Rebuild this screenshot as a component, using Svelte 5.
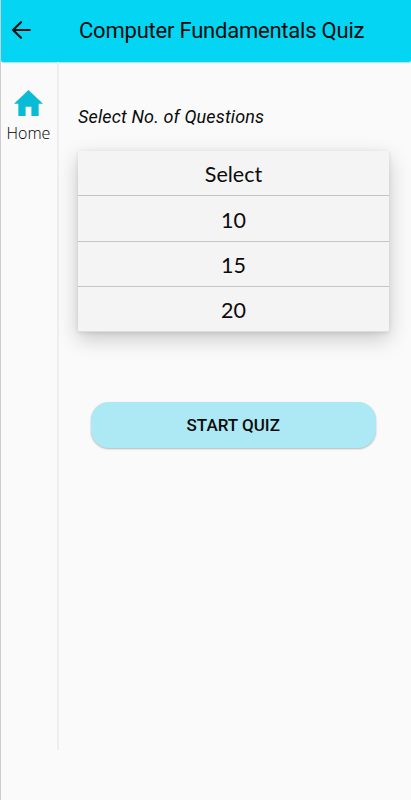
<script lang="ts">
  const options = ['Select', '10', '15', '20'];

  let selected = $state('Select');
</script>

<div class="screen">
  <header>
    <button class="back" aria-label="Back">
      <svg width="20" height="18" viewBox="0 0 20 18">
        <path d="M10 1.2 2 9l8 7.8M2 9h16.8" />
      </svg>
    </button>
    <h1>Computer Fundamentals Quiz</h1>
  </header>

  <div class="body">
    <nav>
      <button class="home">
        <svg width="29" height="26" viewBox="2 3 20 17" preserveAspectRatio="none">
          <path d="M10 20v-6h4v6h5v-8h3L12 3 2 12h3v8z" />
        </svg>
        <span>Home</span>
      </button>
    </nav>

    <main>
      <p class="label">Select No. of Questions</p>
      <div class="menu">
        {#each options as option (option)}
          <button class="option" onclick={() => (selected = option)}>
            <span>{option}</span>
          </button>
        {/each}
      </div>
      <button class="start"><span>START QUIZ</span></button>
    </main>
  </div>
</div>

<style>
  :global(body) { background: #fafafa; }
  button { border: 0; padding: 0; background: none; color: #0c0c0c; cursor: pointer; }
  svg { display: block; }
  .screen {
    box-sizing: border-box; width: 411px; height: 800px; overflow: hidden;
    background: #fafafa; border-left: 1px solid rgba(0, 0, 0, .18);
    font-family: Roboto, "Liberation Sans", sans-serif; color: #0c0c0c;
  }
  header {
    display: flex; align-items: center; height: 62px; border-radius: 0 0 2px 2px;
    background: #03d5f3; box-shadow: 0 1px 1px rgba(3, 190, 220, .35);
  }
  .back { margin: -2px 0 0 10px; }
  .back path {
    fill: none; stroke: #101010; stroke-width: 2.1;
    stroke-linecap: round; stroke-linejoin: round;
  }
  h1 {
    margin: 0 0 0 48px; font-size: 22px; line-height: 26px; letter-spacing: -.22px;
    font-weight: 400; white-space: nowrap;
  }
  .body { display: flex; }
  nav {
    box-sizing: border-box; width: 58px; height: 688px; padding-top: 28px;
    border-right: 2px solid #eee;
  }
  .home { display: flex; flex-direction: column; align-items: center; width: 55px; }
  .home path { fill: #09bcd5; }
  .home span {
    margin-top: 7px; font: 300 16px/20px "Open Sans", Lato, sans-serif;
    color: #000;
  }
  main { flex: 1; padding: 44px 22px 0 19px; }
  .label {
    margin: 0; font-size: 18px; line-height: 22px; letter-spacing: .15px;
    font-style: italic; white-space: nowrap;
  }
  .menu {
    margin-top: 23px; background: #f4f4f4;
    box-shadow: 0 7px 20px rgba(0, 0, 0, .2), 0 1px 4px rgba(0, 0, 0, .1);
  }
  .option {
    display: block; box-sizing: border-box; width: 100%; height: 45.3px; padding-top: 2.4px;
    border-bottom: 1px solid #c4c4c4;
    font: 400 21.5px/28px Lato, "Open Sans", sans-serif;
  }
  .option:last-child { height: 45px; border-color: #ddd; }
  .start {
    display: block; width: 285.5px; height: 46px; margin: 70.5px 0 0 12.5px;
    border-radius: 18px; background: #ade9f4;
    box-shadow: 0 1px 2px rgba(0, 0, 0, .28);
    font: 500 17px/20px Roboto, "Liberation Sans", sans-serif;
  }
</style>
